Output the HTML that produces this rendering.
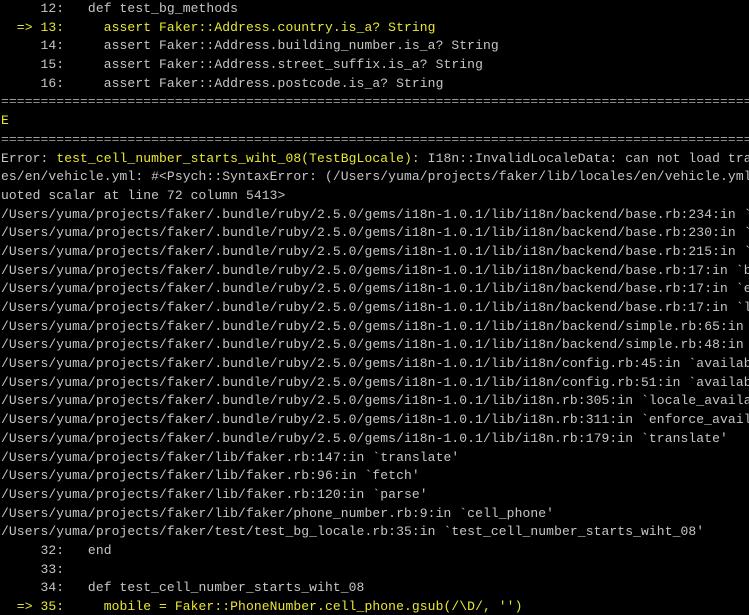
<!DOCTYPE html>
<html><head><meta charset="utf-8"><style>
html,body{margin:0;padding:0;background:#000;width:749px;height:615px;overflow:hidden}
.w{position:absolute;left:0;top:0;width:749px;height:615px;overflow:hidden}
pre{margin:0;position:absolute;left:1px;top:0px;font-family:"Liberation Mono",monospace;font-size:13px;letter-spacing:0.1px;line-height:18.68px;color:#c6c6c6;white-space:pre}
.y{color:#e8e831}
.s{color:#9a9a9a}
</style></head><body><div class="w"><pre>     12:   def test_bg_methods
<span class="y">  => 13:     assert Faker::Address.country.is_a? String</span>
     14:     assert Faker::Address.building_number.is_a? String
     15:     assert Faker::Address.street_suffix.is_a? String
     16:     assert Faker::Address.postcode.is_a? String
<span class="s">===============================================================================================</span>
<span class="y">E</span>
<span class="s">===============================================================================================</span>
Error: <span class="y">test_cell_number_starts_wiht_08(TestBgLocale)</span>: I18n::InvalidLocaleData: can not load translations from /Users/yuma/projects/faker/lib/local
es/en/vehicle.yml: #&lt;Psych::SyntaxError: (/Users/yuma/projects/faker/lib/locales/en/vehicle.yml)
uoted scalar at line 72 column 5413&gt;
/Users/yuma/projects/faker/.bundle/ruby/2.5.0/gems/i18n-1.0.1/lib/i18n/backend/base.rb:234:in `rescue in load_yml'
/Users/yuma/projects/faker/.bundle/ruby/2.5.0/gems/i18n-1.0.1/lib/i18n/backend/base.rb:230:in `load_yml'
/Users/yuma/projects/faker/.bundle/ruby/2.5.0/gems/i18n-1.0.1/lib/i18n/backend/base.rb:215:in `load_file'
/Users/yuma/projects/faker/.bundle/ruby/2.5.0/gems/i18n-1.0.1/lib/i18n/backend/base.rb:17:in `block in load_translations'
/Users/yuma/projects/faker/.bundle/ruby/2.5.0/gems/i18n-1.0.1/lib/i18n/backend/base.rb:17:in `each'
/Users/yuma/projects/faker/.bundle/ruby/2.5.0/gems/i18n-1.0.1/lib/i18n/backend/base.rb:17:in `load_translations'
/Users/yuma/projects/faker/.bundle/ruby/2.5.0/gems/i18n-1.0.1/lib/i18n/backend/simple.rb:65:in `init_translations'
/Users/yuma/projects/faker/.bundle/ruby/2.5.0/gems/i18n-1.0.1/lib/i18n/backend/simple.rb:48:in `available_locales'
/Users/yuma/projects/faker/.bundle/ruby/2.5.0/gems/i18n-1.0.1/lib/i18n/config.rb:45:in `available_locales'
/Users/yuma/projects/faker/.bundle/ruby/2.5.0/gems/i18n-1.0.1/lib/i18n/config.rb:51:in `available_locales_set'
/Users/yuma/projects/faker/.bundle/ruby/2.5.0/gems/i18n-1.0.1/lib/i18n.rb:305:in `locale_available?'
/Users/yuma/projects/faker/.bundle/ruby/2.5.0/gems/i18n-1.0.1/lib/i18n.rb:311:in `enforce_available_locales!'
/Users/yuma/projects/faker/.bundle/ruby/2.5.0/gems/i18n-1.0.1/lib/i18n.rb:179:in `translate'
/Users/yuma/projects/faker/lib/faker.rb:147:in `translate'
/Users/yuma/projects/faker/lib/faker.rb:96:in `fetch'
/Users/yuma/projects/faker/lib/faker.rb:120:in `parse'
/Users/yuma/projects/faker/lib/faker/phone_number.rb:9:in `cell_phone'
/Users/yuma/projects/faker/test/test_bg_locale.rb:35:in `test_cell_number_starts_wiht_08'
     32:   end
     33:
     34:   def test_cell_number_starts_wiht_08
<span class="y">  => 35:     mobile = Faker::PhoneNumber.cell_phone.gsub(/\D/, '')</span>
</pre></div></body></html>
